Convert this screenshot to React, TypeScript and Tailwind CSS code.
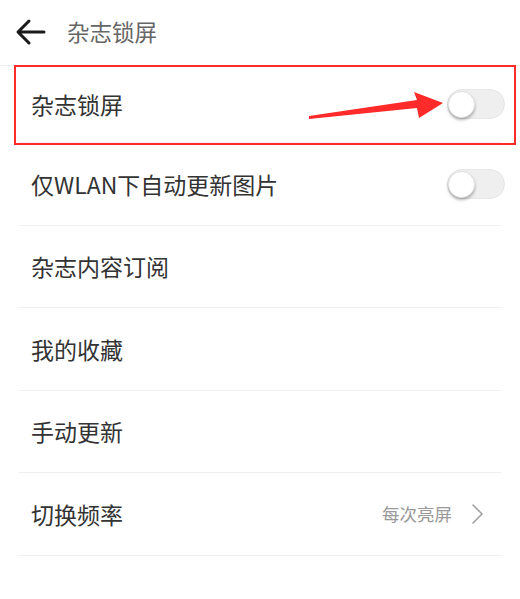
import React from 'react'

const font = { fontFamily: '"Noto Sans CJK SC", "Noto Sans", sans-serif' }

function Toggle() {
  return (
    <div className="relative mr-[-3px] h-[30px] w-[58px] rounded-full border border-[#e6e6e6] bg-[#efefef]">
      <div className="absolute left-[0px] top-[1px] h-[27px] w-[27px] rounded-full border border-[#e2e2e2] bg-white shadow-[0_2px_3px_rgba(0,0,0,0.3)]" />
    </div>
  )
}

function Chevron() {
  return (
    <svg width="14" height="22" viewBox="0 0 14 22" fill="none">
      <path d="M2 2 L11 11 L2 20" stroke="#a0a0a0" strokeWidth="1.6" strokeLinecap="round" strokeLinejoin="round" />
    </svg>
  )
}

interface RowProps {
  label: string
  right?: React.ReactNode
  first?: boolean
  pr?: string
}

function Row({ label, right, first, pr = 'pr-0' }: RowProps) {
  return (
    <div className={`mx-[18px] flex items-center justify-between border-b border-[#f0f0f0] pl-[13px] ${pr} ${first ? 'h-[77px]' : 'h-[82.5px]'}`}>
      <span className="text-[23px] text-[#333333]">{label}</span>
      {right}
    </div>
  )
}

export default function App() {
  return (
    <div className="relative h-[599px] w-[520px] overflow-hidden bg-white" style={font}>
      {/* Header */}
      <div className="flex h-[66px] items-center border-b border-[#eeeeee] pl-[15px]">
        <svg width="31" height="28" viewBox="0 0 31 28" fill="none" className="mt-[-2px]">
          <path d="M29 14 H4 M14 3 L3 14 L14 25" stroke="#1a1a1a" strokeWidth="3" strokeLinecap="round" strokeLinejoin="round" />
        </svg>
        <span className="ml-[21px] mt-[-1px] text-[22.5px] text-[#666666]">杂志锁屏</span>
      </div>

      <Row first label="杂志锁屏" right={<Toggle />} />
      <Row label="仅WLAN下自动更新图片" right={<Toggle />} />
      <Row label="杂志内容订阅" />
      <Row label="我的收藏" />
      <Row label="手动更新" />
      <Row
        label="切换频率"
        pr="pr-[17px]"
        right={
          <div className="flex items-center gap-[19px]">
            <span className="text-[17.5px] text-[#999999]">每次亮屏</span>
            <Chevron />
          </div>
        }
      />

      {/* Annotation overlay */}
      <div className="pointer-events-none absolute left-[14px] top-[65px] h-[80px] w-[502px] border-[2.5px] border-[#ff2a2a]" />
      <svg className="pointer-events-none absolute left-0 top-0" width="520" height="599">
        <polygon points="309,116 417,100 414,92 443,103 419,118 417,108 309,119" fill="#ff2a2a" />
      </svg>
    </div>
  )
}
